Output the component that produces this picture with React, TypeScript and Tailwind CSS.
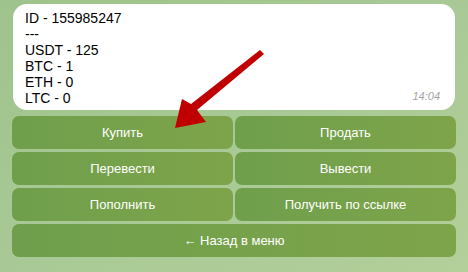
import React from 'react'

const font = { fontFamily: '"Liberation Sans", Arial, sans-serif' }

function KeyButton({ label, wide }: { label: string; wide?: boolean }) {
  return (
    <button
      className={`h-[33px] rounded-[7px] bg-gradient-to-r from-[#6f9f4c] to-[#7ea44a] text-white text-[13px] flex items-center justify-center ${wide ? 'col-span-2' : ''}`}
    >
      {label}
    </button>
  )
}

export default function App() {
  const lines = ['ID - 155985247', '---', 'USDT - 125', 'BTC - 1', 'ETH - 0', 'LTC - 0']
  return (
    <div style={font} className="relative w-[468px] h-[272px] overflow-hidden bg-gradient-to-br from-[#9fc38c] via-[#a8c995] to-[#b3cf9a]">
      {/* Message bubble */}
      <div className="mx-[13px] mt-[4px] h-[106px] rounded-[14px] bg-white pl-[12px] pr-[14px] pt-[6px] relative">
        {lines.map(l => (
          <div key={l} className="text-[14px] leading-[16px] text-black">{l}</div>
        ))}
        <span className="absolute right-[15px] bottom-[6px] text-[11px] italic text-[#a3a3a3]">14:04</span>
      </div>

      {/* Inline keyboard */}
      <div className="grid grid-cols-2 gap-x-[2px] gap-y-[3px] px-[12px] mt-[6px]">
        <KeyButton label="Купить" />
        <KeyButton label="Продать" />
        <KeyButton label="Перевести" />
        <KeyButton label="Вывести" />
        <KeyButton label="Пополнить" />
        <KeyButton label="Получить по ссылке" />
        <KeyButton label="← Назад в меню" wide />
      </div>

      {/* Red annotation arrow */}
      <svg className="absolute left-0 top-0" width="468" height="272" viewBox="0 0 468 272">
        <polygon
          points="260,50 264,54 197,110 206,122 175,128 182,99 191,104"
          fill="#c00000"
        />
      </svg>
    </div>
  )
}
